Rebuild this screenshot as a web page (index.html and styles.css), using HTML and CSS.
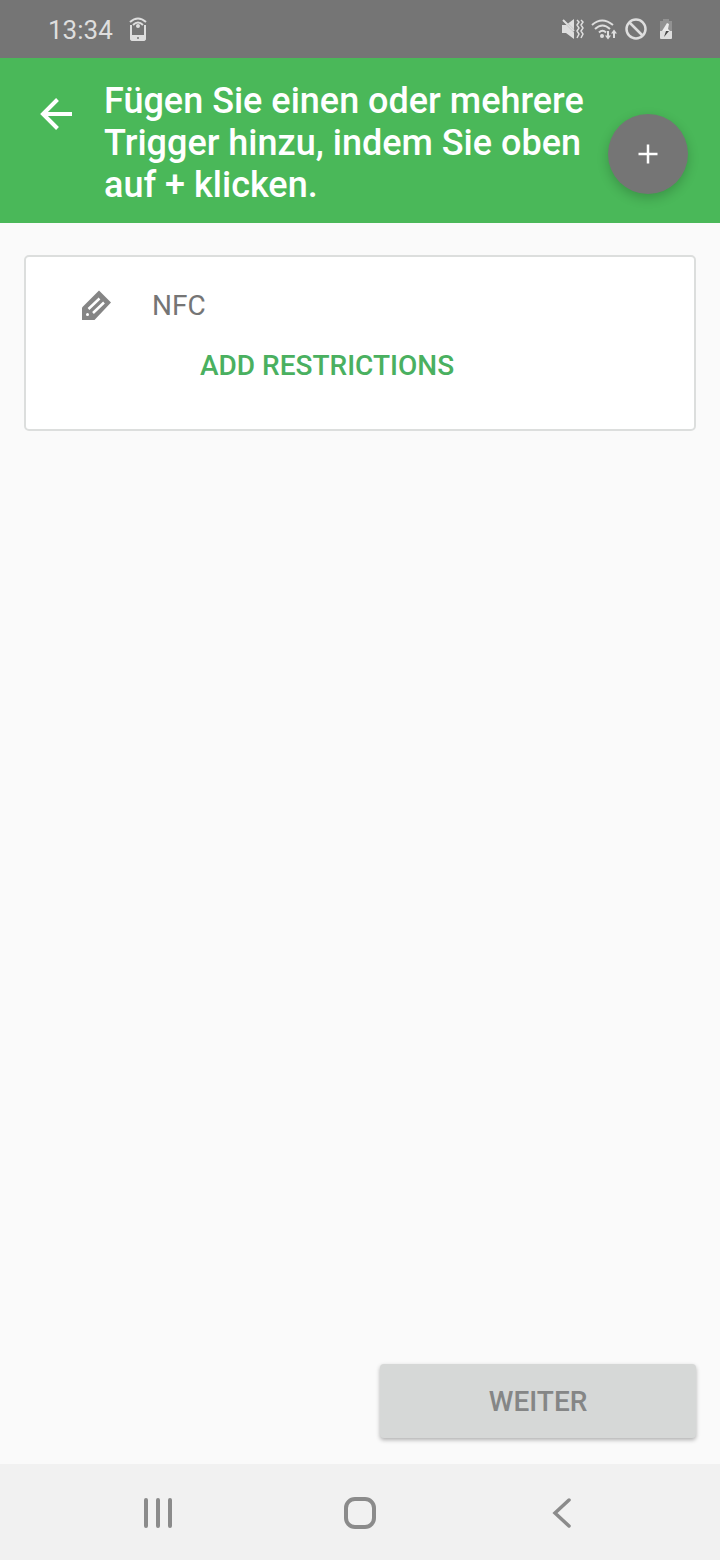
FILE: index.html
```html
<!DOCTYPE html>
<html lang="de">
<head>
<meta charset="utf-8">
<meta name="viewport" content="width=device-width, initial-scale=1">
<title>Trigger hinzufügen</title>
<link rel="stylesheet" href="styles.css">
</head>
<body>
<div class="screen">
  <div class="status">
    <time class="clock">13:34</time>
    <svg class="status-icon" width="20" height="26" viewBox="0 0 20 26" fill="none" stroke="#dedede" stroke-width="2">
      <path d="M2 6Q10-1 18 6M5 9Q10 4 15 9"/>
      <path d="M4 10H3V22Q3 24 5 24H15Q17 24 17 22V10H16"/>
      <path d="M3 20H17V22Q17 24 15 24H5Q3 24 3 22Z" fill="#dedede"/>
      <circle cx="10" cy="10" r="2" fill="#dedede" stroke="none"/>
      <circle cx="10" cy="22" r="1" fill="#757575" stroke="none"/>
    </svg>
    <div class="status-right">
      <svg width="24" height="24" viewBox="0 0 24 24" fill="none" stroke="#dedede" stroke-width="2">
        <path d="M2 8H6L14 2V22L6 16H2Z" fill="#dedede" stroke="none"/>
        <path d="M1 1L16 16" stroke="#757575" stroke-width="2"/>
        <path d="M3 3L14 14"/>
        <path d="M17 3L19 5L17 8L19 11L17 14L19 17L17 21M21 3L23 5L21 8L23 11L21 14L23 17L21 21" stroke-width="1.5"/>
      </svg>
      <svg width="28" height="24" viewBox="0 0 28 24" fill="none" stroke="#dedede" stroke-width="2">
        <path d="M2 8Q12-1 23 8M5 12Q12.500 5 20 12M9 15.500Q12.500 12 16 15.500"/>
        <circle cx="12" cy="19" r="2" fill="#dedede" stroke="none"/>
        <path d="M18 14V20M24 21V15"/>
        <path d="M15 18.500H21L18 22.500ZM21 16.500H27L24 12.500Z" fill="#dedede" stroke="none"/>
      </svg>
      <svg width="24" height="24" viewBox="0 0 24 24" fill="none" stroke="#dedede" stroke-width="2.500">
        <circle cx="12" cy="12" r="9.500"/><path d="M5.500 5.500L18.500 18.500"/>
      </svg>
      <svg class="battery" width="16" height="24" viewBox="0 0 16 24">
        <path d="M2 4H5V2H11V4H14V15H2Z" fill="#929292"/>
        <path d="M2 14H14V21Q14 22 13 22H3Q2 22 2 21Z" fill="#dedede"/>
        <path d="M9 6L4 14H12L10 12L11 7Z" fill="#ececec"/>
        <path d="M8 14H11L6 20Z" fill="#484848"/>
      </svg>
    </div>
  </div>

  <header class="appbar">
    <button class="back" type="button" aria-label="Zurück">
      <svg width="32" height="32" viewBox="0 0 32 32" fill="none" stroke="#fff" stroke-width="4"><path d="M32 16H3M17.500 1.500L3 16L17.500 30.500"/></svg>
    </button>
    <h1 class="title">Fügen Sie einen oder mehrere Trigger hinzu, indem Sie oben auf + klicken.</h1>
    <button class="fab" type="button" aria-label="Trigger hinzufügen">
      <svg width="20" height="20" viewBox="0 0 20 20" stroke="#fff" stroke-width="2.500"><path d="M0.500 10H19.500M10 0.500V19.500"/></svg>
    </button>
  </header>

  <main class="content">
    <section class="card">
      <div class="trigger">
        <svg width="32" height="32" viewBox="0 0 32 32">
          <path d="M19 1.500L31 13.500L14.500 31H2V18.500Z" fill="#858585"/>
          <path d="M8.500 20L19.500 9.500M13 24L24 13.500" stroke="#fff" stroke-width="2.500"/>
          <circle cx="7.500" cy="25.500" r="1.500" fill="#fff"/>
        </svg>
        <span>NFC</span>
      </div>
      <button class="restrict" type="button">ADD RESTRICTIONS</button>
    </section>
    <button class="next" type="button" disabled>WEITER</button>
  </main>

  <nav class="navbar">
    <button type="button" aria-label="Letzte Apps">
      <svg width="32" height="32" viewBox="0 0 32 32" stroke="#8b8b8b" stroke-width="4" stroke-linecap="round"><path d="M4 3V29M16 3V29M28 3V29"/></svg>
    </button>
    <button type="button" aria-label="Startseite">
      <svg width="32" height="32" viewBox="0 0 32 32" fill="none" stroke="#8b8b8b" stroke-width="4"><rect x="2" y="2" width="28" height="28" rx="9"/></svg>
    </button>
    <button type="button" aria-label="Zurück">
      <svg width="32" height="32" viewBox="0 0 32 32" fill="none" stroke="#8b8b8b" stroke-width="3.500" stroke-linecap="round"><path d="M23 3L9 16L23 29"/></svg>
    </button>
  </nav>
</div>
</body>
</html>
```
FILE: styles.css
```css
* {
  box-sizing: border-box;
}

body {
  margin: 0;
  background: #fafafa;
  font-family: Roboto, "Liberation Sans", sans-serif;
}

button {
  padding: 0;
  border: 0;
  background: none;
  font: inherit;
  cursor: pointer;
}

svg {
  display: block;
  flex: none;
}

.screen {
  display: flex;
  flex-direction: column;
  min-height: 100vh;
}

.status {
  display: flex;
  align-items: center;
  height: 58px;
  padding: 0 46px 0 48px;
  background: #757575;
  color: #dedede;
}

.clock {
  font-size: 26px;
  line-height: 32px;
  padding-top: 2px;
}

.status-icon {
  margin-left: 15px;
}

.status-right {
  display: flex;
  align-items: center;
  gap: 6px;
  margin-left: auto;
}

.battery {
  margin-left: 4px;
}

.appbar {
  display: flex;
  align-items: flex-start;
  padding: 22px 32px 17px 40px;
  background: #4ab859;
}

.back {
  margin: 18px 32px 0 0;
}

.title {
  flex: 1;
  margin: 0;
  color: #fff;
  font-size: 36px;
  font-weight: 500;
  line-height: 42px;
}

.fab {
  display: grid;
  place-items: center;
  flex: none;
  align-self: flex-end;
  width: 80px;
  height: 80px;
  margin: 0 0 12px 16px;
  border-radius: 50%;
  background: #757575;
  box-shadow: 0 4px 12px rgba(0, 0, 0, 0.2);
}

.content {
  display: flex;
  flex: 1;
  flex-direction: column;
  padding: 32px 24px 26px;
}

.card {
  padding: 22px 54px 26px;
  border: 2px solid #dcdedd;
  border-radius: 5px;
  background: #fff;
}

.trigger {
  display: flex;
  align-items: center;
  gap: 40px;
  height: 52px;
  color: #757575;
  font-size: 28px;
}

.restrict {
  display: block;
  height: 72px;
  margin-left: 120px;
  padding-bottom: 4px;
  color: #4ab060;
  font-size: 28px;
  font-weight: 500;
}

.next {
  align-self: flex-end;
  width: 47%;
  height: 74px;
  margin-top: auto;
  border-radius: 4px;
  background: #d6d8d7;
  box-shadow: 0 2px 4px rgba(0, 0, 0, 0.3);
  color: #858686;
  font-size: 28px;
  font-weight: 500;
}

.navbar {
  display: grid;
  grid-template-columns: repeat(3, 1fr);
  height: 96px;
  padding: 2px 8% 0;
  background: #f1f1f1;
}

.navbar button {
  display: grid;
  place-items: center;
}
```
